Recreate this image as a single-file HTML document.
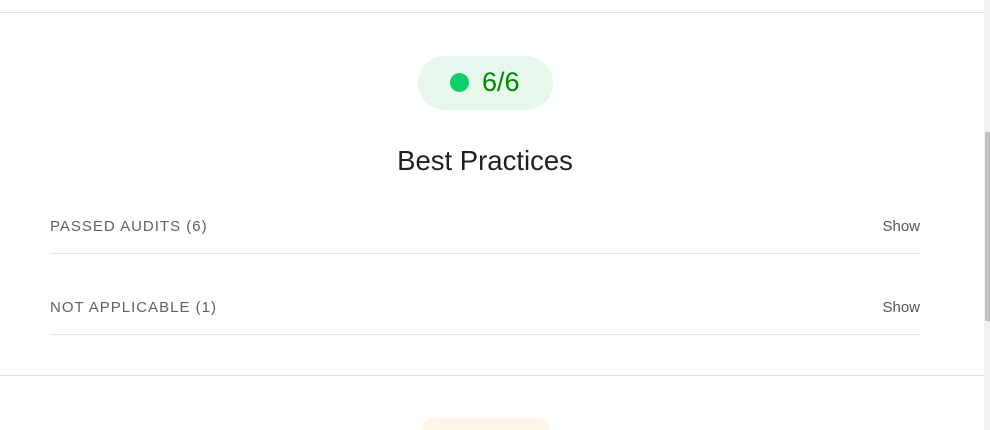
<!DOCTYPE html>
<html><head><meta charset="utf-8"><style>
html,body{margin:0;padding:0;width:990px;height:430px;overflow:hidden;background:#fff;font-family:"Liberation Sans",Arial,sans-serif;position:relative;}
.hl{position:absolute;left:0;width:984px;height:1px;background:#e0e0e0;}
.sb{position:absolute;left:984px;top:0;width:6px;height:430px;background:#f1f1f1;}
.th{position:absolute;left:985px;top:132px;width:5px;height:189px;background:#c1c1c1;}
.pill{position:absolute;left:418px;top:56px;width:135px;height:54px;border-radius:27px;background:#e6f7ec;}
.dot{position:absolute;left:450px;top:73px;width:19px;height:19px;border-radius:50%;background:#0cce6b;}
.score{position:absolute;left:482px;top:67px;font-size:27px;line-height:30px;color:#080;}
.title{position:absolute;left:0;width:970px;top:145px;text-align:center;font-size:27.5px;line-height:32px;color:#212121;}
.lab{position:absolute;left:50px;font-size:15px;letter-spacing:1px;color:#616161;}
.show{position:absolute;right:70px;font-size:15px;color:#555;}
.rl{position:absolute;left:50px;width:870px;height:1px;background:#e4e4e4;}
.peach{position:absolute;left:422px;top:418px;width:128px;height:12px;border-radius:20px 20px 0 0;background:#fff5e9;}
</style></head><body>
<div class="hl" style="top:12px"></div>
<div class="pill"></div><div class="dot"></div><div class="score">6/6</div>
<div class="title">Best Practices</div>
<div class="lab" style="top:218px">PASSED AUDITS (6)</div>
<div class="show" style="top:218px">Show</div>
<div class="rl" style="top:253px"></div>
<div class="lab" style="top:299px">NOT APPLICABLE (1)</div>
<div class="show" style="top:299px">Show</div>
<div class="rl" style="top:334px"></div>
<div class="hl" style="top:375px"></div>
<div class="peach"></div>
<div class="sb"></div><div class="th"></div>
</body></html>
